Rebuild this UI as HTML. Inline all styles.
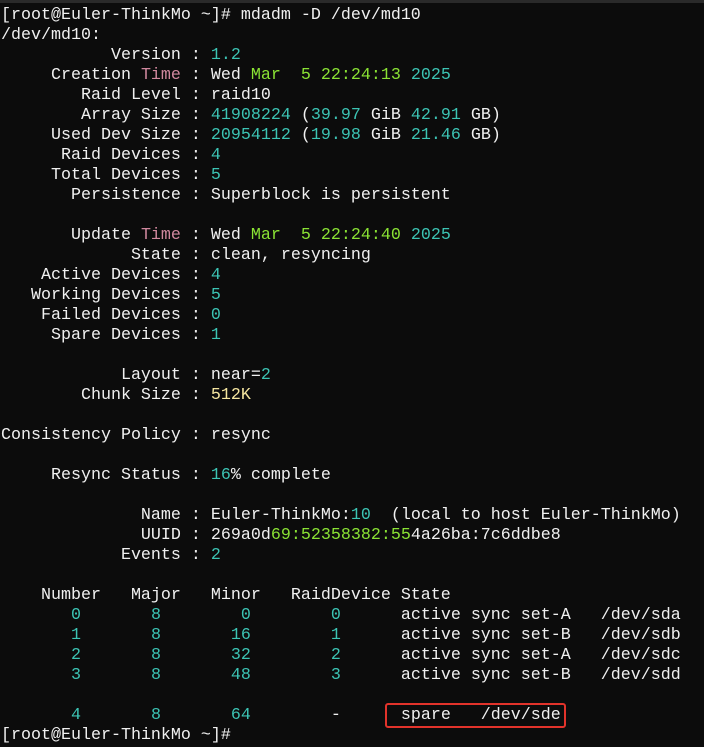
<!DOCTYPE html>
<html><head><meta charset="utf-8"><style>
html,body{margin:0;padding:0;background:#0c0c0c;width:704px;height:747px;overflow:hidden}
.top{position:absolute;left:0;top:0;width:704px;height:3px;background:#2a2a2a}
pre{position:absolute;left:1px;top:6px;margin:0;font-family:"Liberation Mono",monospace;font-size:16.67px;line-height:20px;color:#f0f0f0;white-space:pre}
.c{color:#3cc4b4}.g{color:#8ae234}.p{color:#d0889e}.y{color:#f5e6a0}
.box{position:absolute;left:385px;top:703px;width:177px;height:21px;border:2px solid #e2332b;border-radius:3px}
</style></head><body><div class="top"></div><pre>[root@Euler-ThinkMo ~]# mdadm -D /dev/md10
/dev/md10:
           Version : <span class="c">1.2</span>
     Creation <span class="p">Time</span> : Wed <span class="g">Mar  5 22:24:13</span> <span class="c">2025</span>
        Raid Level : raid10
        Array Size : <span class="c">41908224</span> (<span class="c">39.97</span> GiB <span class="c">42.91</span> GB)
     Used Dev Size : <span class="c">20954112</span> (<span class="c">19.98</span> GiB <span class="c">21.46</span> GB)
      Raid Devices : <span class="c">4</span>
     Total Devices : <span class="c">5</span>
       Persistence : Superblock is persistent

       Update <span class="p">Time</span> : Wed <span class="g">Mar  5 22:24:40</span> <span class="c">2025</span>
             State : clean, resyncing
    Active Devices : <span class="c">4</span>
   Working Devices : <span class="c">5</span>
    Failed Devices : <span class="c">0</span>
     Spare Devices : <span class="c">1</span>

            Layout : near=<span class="c">2</span>
        Chunk Size : <span class="y">512K</span>

Consistency Policy : resync

     Resync Status : <span class="c">16</span>% complete

              Name : Euler-ThinkMo:<span class="c">10</span>  (local to host Euler-ThinkMo)
              UUID : 269a0d<span class="g">69:52358382:55</span>4a26ba:7c6ddbe8
            Events : <span class="c">2</span>

    Number   Major   Minor   RaidDevice State
       <span class="c">0</span>       <span class="c">8</span>        <span class="c">0</span>        <span class="c">0</span>      active sync set-A   /dev/sda
       <span class="c">1</span>       <span class="c">8</span>       <span class="c">16</span>        <span class="c">1</span>      active sync set-B   /dev/sdb
       <span class="c">2</span>       <span class="c">8</span>       <span class="c">32</span>        <span class="c">2</span>      active sync set-A   /dev/sdc
       <span class="c">3</span>       <span class="c">8</span>       <span class="c">48</span>        <span class="c">3</span>      active sync set-B   /dev/sdd

       <span class="c">4</span>       <span class="c">8</span>       <span class="c">64</span>        -      spare   /dev/sde
[root@Euler-ThinkMo ~]#</pre><div class="box"></div></body></html>
